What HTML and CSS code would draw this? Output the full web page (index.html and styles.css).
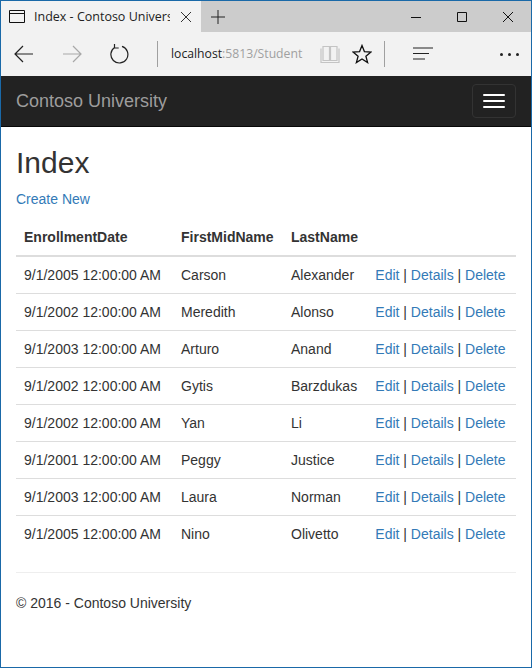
FILE: index.html
```html
<!DOCTYPE html>
<html lang="en">
<head>
  <meta charset="UTF-8">
  <meta name="viewport" content="width=device-width, initial-scale=1.0">
  <title>Index - Contoso University</title>
  <link rel="stylesheet" href="styles.css">
</head>
<body>

  <div class="window">

    <!-- Browser tabs -->
    <div class="tabbar">
      <div class="tab">
        <svg class="tab-icon" width="17" height="14" viewBox="0 0 17 14"><path d="M.5.5h15v12H.5zM.5 3.500h15" fill="none" stroke="#111"/></svg>
        <span class="tab-title">Index - Contoso University</span>
        <svg class="tab-close" width="12" height="12" viewBox="0 0 12 12"><path d="M1 1l10 10M11 1L1 11" fill="none" stroke="#333"/></svg>
      </div>
      <svg class="tab-new" width="14" height="14" viewBox="0 0 14 14"><path d="M7 0v14M0 7h14" fill="none" stroke="#222"/></svg>
      <div class="window-controls">
        <svg width="10" height="10" viewBox="0 0 10 10"><path d="M0 5.500h10" stroke="#111"/></svg>
        <svg width="10" height="10" viewBox="0 0 10 10"><path d="M.5.5h9v9h-9z" fill="none" stroke="#111"/></svg>
        <svg width="10" height="10" viewBox="0 0 10 10"><path d="M0 0l10 10M10 0L0 10" fill="none" stroke="#111"/></svg>
      </div>
    </div>

    <!-- Browser toolbar -->
    <div class="toolbar">
      <svg class="tool-back" width="20" height="18" viewBox="0 0 20 18"><path d="M19 9H1M9 1L1 9l8 8" fill="none" stroke="#222" stroke-width="1.2"/></svg>
      <svg class="tool-forward" width="20" height="18" viewBox="0 0 20 18"><path d="M1 9h18M11 1l8 8-8 8" fill="none" stroke="#a8a8a8" stroke-width="1.2"/></svg>
      <svg class="tool-refresh" width="20" height="20" viewBox="0 0 20 20"><path d="M6 3.200A8.500 8.500 0 1 0 13 2.400M5.500 0v4h4.200" fill="none" stroke="#222" stroke-width="1.2"/></svg>
      <span class="tool-sep sep-first"></span>
      <div class="address"><span class="host">localhost</span>:5813/Student</div>
      <svg class="tool-book" width="20" height="20" viewBox="0 0 20 20"><path d="M3 2.500h6.500v14H3zM10.500 2.500H17v14h-6.500zM1 4.500v14h18v-14" fill="none" stroke="#c4c4c4" stroke-width="1.200"/></svg>
      <svg class="tool-star" width="20" height="20" viewBox="0 0 20 20"><path d="M10 1.500l2.400 6.100 6.600.4-5.100 4.200 1.700 6.400L10 15l-5.600 3.600 1.700-6.400L1 8l6.600-.4z" fill="none" stroke="#111" stroke-width="1.300"/></svg>
      <span class="tool-sep sep-second"></span>
      <svg class="tool-hub" width="20" height="14" viewBox="0 0 20 14"><path d="M0 1h20M0 6.500h16M0 12h12" fill="none" stroke="#222" stroke-width="1.200"/></svg>
      <div class="tool-more"><i></i><i></i><i></i></div>
    </div>

    <!-- Site navbar -->
    <nav class="navbar">
      <a class="brand" href="#">Contoso University</a>
      <button class="toggler" type="button"><span></span><span></span><span></span></button>
    </nav>

    <div class="container">
      <h2>Index</h2>
      <p class="create"><a href="#">Create New</a></p>

      <table class="students">
        <thead>
          <tr>
            <th class="col-date">EnrollmentDate</th>
            <th class="col-first">FirstMidName</th>
            <th>LastName</th>
            <th></th>
          </tr>
        </thead>
        <tbody>
          <tr>
            <td>9/1/2005 12:00:00 AM</td>
            <td>Carson</td>
            <td>Alexander</td>
            <td><a href="#">Edit</a> | <a href="#">Details</a> | <a href="#">Delete</a></td>
          </tr>
          <tr>
            <td>9/1/2002 12:00:00 AM</td>
            <td>Meredith</td>
            <td>Alonso</td>
            <td><a href="#">Edit</a> | <a href="#">Details</a> | <a href="#">Delete</a></td>
          </tr>
          <tr>
            <td>9/1/2003 12:00:00 AM</td>
            <td>Arturo</td>
            <td>Anand</td>
            <td><a href="#">Edit</a> | <a href="#">Details</a> | <a href="#">Delete</a></td>
          </tr>
          <tr>
            <td>9/1/2002 12:00:00 AM</td>
            <td>Gytis</td>
            <td>Barzdukas</td>
            <td><a href="#">Edit</a> | <a href="#">Details</a> | <a href="#">Delete</a></td>
          </tr>
          <tr>
            <td>9/1/2002 12:00:00 AM</td>
            <td>Yan</td>
            <td>Li</td>
            <td><a href="#">Edit</a> | <a href="#">Details</a> | <a href="#">Delete</a></td>
          </tr>
          <tr>
            <td>9/1/2001 12:00:00 AM</td>
            <td>Peggy</td>
            <td>Justice</td>
            <td><a href="#">Edit</a> | <a href="#">Details</a> | <a href="#">Delete</a></td>
          </tr>
          <tr>
            <td>9/1/2003 12:00:00 AM</td>
            <td>Laura</td>
            <td>Norman</td>
            <td><a href="#">Edit</a> | <a href="#">Details</a> | <a href="#">Delete</a></td>
          </tr>
          <tr>
            <td>9/1/2005 12:00:00 AM</td>
            <td>Nino</td>
            <td>Olivetto</td>
            <td><a href="#">Edit</a> | <a href="#">Details</a> | <a href="#">Delete</a></td>
          </tr>
        </tbody>
      </table>

      <hr>
      <footer>&copy; 2016 - Contoso University</footer>
    </div>

  </div>

</body>
</html>
```

FILE: styles.css
```css
* {
  box-sizing: border-box;
}

html, body {
  height: 100%;
}

body {
  margin: 0;
  font-family: "Liberation Sans", Arial, sans-serif;
  font-size: 14px;
  line-height: 20px;
  color: #333;
  background: #fff;
}

.window {
  height: 668px;
  overflow: hidden;
  border: 1px solid #1a69a8;
  background: #fff;
}

/* Browser tabs */
.tabbar {
  display: flex;
  align-items: center;
  height: 31px;
  background: #cccccc;
}

.tab {
  display: flex;
  align-items: center;
  width: 200px;
  height: 31px;
  padding-left: 8px;
  background: #f2f2f2;
}

.tab-title {
  width: 136px;
  margin-left: 8px;
  overflow: hidden;
  white-space: nowrap;
  font-family: "Open Sans", sans-serif;
  font-size: 12.5px;
  color: #222;
}

.tab-close {
  margin-left: 10px;
}

.tab-new {
  margin-left: 10px;
}

.window-controls {
  display: flex;
  gap: 36px;
  margin-left: auto;
  margin-right: 18px;
}

/* Browser toolbar */
.toolbar {
  display: flex;
  align-items: center;
  height: 44px;
  background: #f2f2f2;
}

.tool-back {
  margin-left: 13px;
}

.tool-forward {
  margin-left: 28px;
}

.tool-refresh {
  margin-left: 27px;
}

.tool-sep {
  width: 1px;
  height: 26px;
  background: #a0a0a0;
}

.sep-first {
  margin-left: 28px;
}

.address {
  width: 149px;
  margin-left: 13px;
  overflow: hidden;
  white-space: nowrap;
  font-family: "Open Sans", sans-serif;
  font-size: 12.2px;
  color: #a0a0a0;
}

.host {
  color: #222;
}

.sep-second {
  margin-left: 12px;
}

.tool-star {
  margin-left: 12px;
}

.tool-hub {
  margin-left: 28px;
}

.tool-more {
  display: flex;
  gap: 5px;
  margin-left: 67px;
}

.tool-more i {
  width: 3px;
  height: 3px;
  border-radius: 50%;
  background: #222;
}

/* Site navbar */
.navbar {
  display: flex;
  align-items: center;
  justify-content: space-between;
  height: 51px;
  padding: 0 15px;
  background: #222;
  border-bottom: 1px solid #080808;
}

.brand {
  font-size: 18px;
  color: #9d9d9d;
  text-decoration: none;
}

.toggler {
  display: flex;
  flex-direction: column;
  justify-content: center;
  gap: 4px;
  width: 44px;
  height: 34px;
  padding: 0;
  align-items: center;
  background: transparent;
  border: 1px solid #333;
  border-radius: 4px;
}

.toggler span {
  width: 22px;
  height: 2px;
  border-radius: 1px;
  background: #fff;
}

/* Page content */
.container {
  padding: 0 15px;
}

h2 {
  margin: 19px 0 10px;
  font-size: 30px;
  font-weight: 500;
  line-height: 33px;
}

.create {
  margin: 0 0 10px;
}

a {
  color: #337ab7;
  text-decoration: none;
}

.students {
  width: 100%;
  margin-bottom: 20px;
  border-collapse: collapse;
}

.students th,
.students td {
  padding: 8px;
  text-align: left;
  vertical-align: top;
}

.students th {
  border-bottom: 2px solid #ddd;
}

.students td {
  border-top: 1px solid #ddd;
}

.students thead + tbody tr:first-child td {
  border-top: 0;
}

.col-date {
  width: 157px;
}

.col-first {
  width: 110px;
}

hr {
  margin: 20px 0;
  border: 0;
  border-top: 1px solid #eee;
}
```
